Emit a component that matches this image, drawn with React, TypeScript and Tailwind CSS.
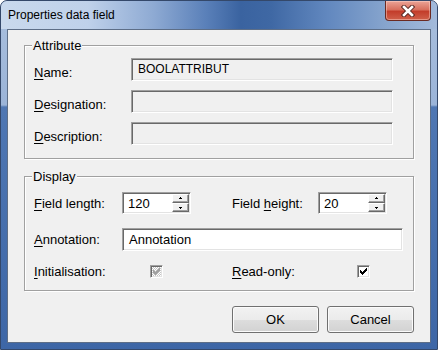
import React from "react";

const sunken =
  "border border-t-[#a0a0a0] border-l-[#a0a0a0] border-r-white border-b-white shadow-[inset_1px_1px_0_#696969,inset_-1px_-1px_0_#e3e3e3]";

function U({ children }: { children: React.ReactNode }) {
  return <span className="underline decoration-1 underline-offset-[2px]">{children}</span>;
}

function SpinBtn({ up }: { up?: boolean }) {
  return (
    <div className="flex-1 flex items-center justify-center bg-[#f0f0f0] border border-t-white border-l-white border-r-[#696969] border-b-[#696969] shadow-[inset_-1px_-1px_0_#a0a0a0]">
      <svg width="5" height="3" viewBox="0 0 5 3" shapeRendering="crispEdges">
        {up ? (
          <>
            <rect x="2" y="0" width="1" height="1" fill="#000" />
            <rect x="1" y="1" width="3" height="1" fill="#000" />
          </>
        ) : (
          <>
            <rect x="1" y="1" width="3" height="1" fill="#000" />
            <rect x="2" y="2" width="1" height="1" fill="#000" />
          </>
        )}
      </svg>
    </div>
  );
}

function Spin({ value }: { value: string }) {
  return (
    <div className={`w-[69px] h-[22px] bg-white flex ${sunken}`}>
      <div className="flex-1 pl-[5px] flex items-center">{value}</div>
      <div className="w-[18px] flex flex-col py-[1px] pr-[1px]">
        <SpinBtn up />
        <SpinBtn />
      </div>
    </div>
  );
}

function CheckMark({ color }: { color: string }) {
  const rows: [number, number, number][] = [
    [6, 0, 1],
    [5, 1, 2],
    [0, 2, 1],
    [4, 2, 3],
    [0, 3, 2],
    [3, 3, 3],
    [0, 4, 5],
    [1, 5, 3],
    [2, 6, 1],
  ];
  return (
    <svg width="7" height="7" viewBox="0 0 7 7" shapeRendering="crispEdges">
      {rows.map(([x, y, w], i) => (
        <rect key={i} x={x} y={y} width={w} height={1} fill={color} />
      ))}
    </svg>
  );
}

function Check({ disabled }: { disabled?: boolean }) {
  return (
    <div
      className={`w-[13px] h-[13px] flex items-center justify-center ${sunken} ${
        disabled
          ? "bg-[repeating-conic-gradient(#c4c4c4_0_25%,#ffffff_0_50%)] bg-size-[2px_2px]"
          : "bg-white"
      }`}
    >
      <CheckMark color={disabled ? "#a0a0a0" : "#000000"} />
    </div>
  );
}

function AttrRow({ label, value }: { label: React.ReactNode; value?: string }) {
  return (
    <div className="flex items-start h-[23px]">
      <div className="w-[97px] pt-[7px]">{label}</div>
      <div className={`w-[262px] h-[23px] bg-[#f0f0f0] pl-[6px] flex items-center text-[12px] ${sunken}`}>
        {value}
      </div>
    </div>
  );
}

function Btn({ children }: { children: React.ReactNode }) {
  return (
    <div className="w-[87px] h-[27px] rounded-[3px] border border-[#707070] bg-[linear-gradient(#f2f2f2_0%,#ebebeb_50%,#dddddd_51%,#d2d2d2_100%)] shadow-[inset_0_0_0_1px_#fbfbfb] flex items-center justify-center">
      {children}
    </div>
  );
}

export default function App() {
  return (
    <div className="w-[438px] h-[350px] relative rounded-t-[7px] border border-[#34486a] bg-[linear-gradient(180deg,#a9bfdd_0px,#9bb4d8_104px,#4f77b3_106px,#3d66a6_350px)] font-['Liberation_Sans',Arial,sans-serif] text-[13px] leading-[15px] text-black overflow-hidden">
      <div className="h-[28px] flex items-center pl-[7px] rounded-t-[6px] bg-[linear-gradient(90deg,#c9d9ed_0%,#bfd1ea_20%,#8eaad3_35%,#5a80b9_47%,#3a63a0_55%,#3f68a4_62%,#6288bf_75%,#86a4cd_88%,#a3badb_100%)] text-[12px]">
        Properties data field
      </div>
      <div className="absolute top-0 right-[6px] w-[46px] h-[20px] rounded-b-[4px] border border-t-0 border-[#6b2a22] bg-[linear-gradient(180deg,#eba497_0%,#d8705e_45%,#c33d2b_55%,#d0604a_100%)] shadow-[inset_0_0_0_1px_rgba(255,220,210,0.45)] flex items-center justify-center">
        <svg width="14" height="12" viewBox="0 0 14 12">
          <path d="M3 2 L11 10 M11 2 L3 10" stroke="#5a2a24" strokeWidth="4.5" strokeLinecap="square" />
          <path d="M3 2 L11 10 M11 2 L3 10" stroke="#ffffff" strokeWidth="2.6" strokeLinecap="square" />
        </svg>
      </div>

      <div className="ml-[6px] w-[424px] h-[314px] border border-[#5d6e87] bg-[#f0f0f0] flex flex-col pl-[16px] pt-[15px]">
        {/* Attribute */}
        <div className="relative w-[390px] border border-[#a0a0a0] shadow-[1px_1px_0_#ffffff,inset_1px_1px_0_#ffffff] pl-[9px] pt-[12px] pb-[13px] flex flex-col gap-[9px]">
          <span className="absolute -top-[8px] left-[7px] px-[1px] bg-[#f0f0f0]">Attribute</span>
          <AttrRow label={<><U>N</U>ame:</>} value="BOOLATTRIBUT" />
          <AttrRow label={<><U>D</U>esignation:</>} />
          <AttrRow label={<><U>D</U>escription:</>} />
        </div>

        {/* Display */}
        <div className="relative mt-[17px] w-[390px] border border-[#a0a0a0] shadow-[1px_1px_0_#ffffff,inset_1px_1px_0_#ffffff] pl-[9px] pt-[15px] pb-[12px] flex flex-col gap-[14px]">
          <span className="absolute -top-[8px] left-[7px] px-[1px] bg-[#f0f0f0]">Display</span>
          <div className="flex items-center h-[22px]">
            <div className="w-[88px]">
              <U>F</U>ield length:
            </div>
            <Spin value="120" />
            <div className="w-[41px]" />
            <div className="w-[86px]">
              Field <U>h</U>eight:
            </div>
            <Spin value="20" />
          </div>
          <div className="flex items-center h-[23px]">
            <div className="w-[88px]">
              <U>A</U>nnotation:
            </div>
            <div className={`w-[281px] h-[23px] bg-white pl-[6px] flex items-center ${sunken}`}>Annotation</div>
          </div>
          <div className="flex items-center h-[13px]">
            <div className="w-[116px]">
              <U>I</U>nitialisation:
            </div>
            <Check disabled />
            <div className="w-[69px]" />
            <div className="w-[125px]">
              <U>R</U>ead-only:
            </div>
            <Check />
          </div>
        </div>

        {/* Buttons */}
        <div className="mt-[15px] flex justify-end gap-[8px] pr-[16px]">
          <Btn>OK</Btn>
          <Btn>Cancel</Btn>
        </div>
      </div>
    </div>
  );
}
